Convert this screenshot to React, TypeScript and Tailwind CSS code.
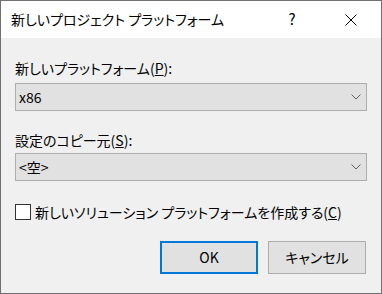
const font = "font-['Noto_Sans_CJK_JP',sans-serif] [font-feature-settings:'palt']"

function Combo({ value }: { value: string }) {
  return (
    <div className="flex h-[28px] items-center justify-between border border-[#adadad] bg-[#e1e1e1] pl-[3px] pr-[5px]">
      <span className="text-[14px] leading-none">{value}</span>
      <svg width="10" height="6" viewBox="0 0 10 6" className="text-[#606060]">
        <path d="M0.5 0.5 L5 5 L9.5 0.5" fill="none" stroke="currentColor" strokeWidth="1" />
      </svg>
    </div>
  )
}

export default function App() {
  return (
    <div className={`${font} flex h-[294px] w-[382px] flex-col border border-[#707070] text-black`}>
      <div className="flex h-[37px] items-center bg-white">
        <span className="flex-1 pl-[10px] text-[14px]">新しいプロジェクト プラットフォーム</span>
        <span className="w-[58px] text-center text-[15px]">?</span>
        <span className="flex w-[60px] justify-center">
          <svg width="12" height="12" viewBox="0 0 12 12">
            <path d="M0.5 0.5 L11.5 11.5 M11.5 0.5 L0.5 11.5" fill="none" stroke="#000" strokeWidth="1" />
          </svg>
        </span>
      </div>

      <div className="flex flex-1 flex-col bg-[#f0f0f0] px-[14px] pt-[20px] text-[14px]">
        <div className="h-[20px] leading-[20px]">
          新しいプラットフォーム(<span className="underline">P</span>):
        </div>
        <div className="mt-[5px]">
          <Combo value="x86" />
        </div>

        <div className="mt-[19px] h-[20px] leading-[20px]">
          設定のコピー元(<span className="underline">S</span>):
        </div>
        <div className="mt-[3px]">
          <Combo value="<空>" />
        </div>

        <label className="mt-[21px] flex items-center gap-[4px]">
          <span className="h-[16px] w-[16px] border border-[#333] bg-white" />
          <span className="leading-[20px]">
            新しいソリューション プラットフォームを作成する(<span className="underline">C</span>)
          </span>
        </label>

        <div className="mt-[19px] flex justify-end gap-[10px] pr-[1px]">
          <button className="h-[33px] w-[98px] border-2 border-[#0078d7] bg-[#e1e1e1] text-[14px]">OK</button>
          <button className="h-[33px] w-[98px] border border-[#adadad] bg-[#e1e1e1] text-[14px]">キャンセル</button>
        </div>
      </div>
    </div>
  )
}
